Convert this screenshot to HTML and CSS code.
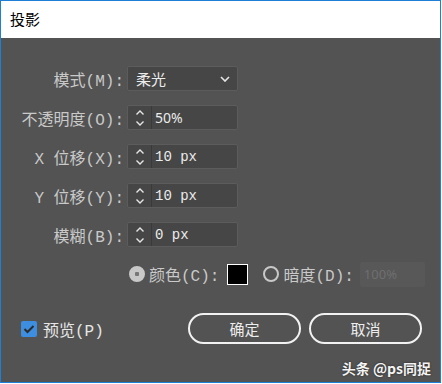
FILE: index.html
```html
<!DOCTYPE html>
<html>
<head>
	<title>投影</title>
	<meta content="width=device-width, initial-scale=1" name="viewport">
	<link rel="stylesheet" href="styles.css">
</head>
<body>
<div class="window">
	<div class="title-bar">投影</div>
	<div class="content">
		<div class="form">
			<label class="label">模式(M):</label>
			<div class="select">
				<span>柔光</span>
				<svg class="chevron" width="10" height="6" viewBox="0 0 10 6">
					<path d="M1,1 L5,5 L9,1" fill="none" stroke="#e6e6e6" stroke-width="1.6"></path>
				</svg>
			</div>

			<label class="label">不透明度(O):</label>
			<div class="field">
				<span class="spin">
					<svg width="10" height="18" viewBox="0 0 10 18">
						<path d="M1.5,5.5 L5,2 L8.5,5.5 M1.5,12.5 L5,16 L8.5,12.5" fill="none" stroke="#e6e6e6" stroke-width="1.4"></path>
					</svg>
				</span>
				<span class="value sans">50%</span>
			</div>

			<label class="label">X 位移(X):</label>
			<div class="field">
				<span class="spin">
					<svg width="10" height="18" viewBox="0 0 10 18">
						<path d="M1.5,5.5 L5,2 L8.5,5.5 M1.5,12.5 L5,16 L8.5,12.5" fill="none" stroke="#e6e6e6" stroke-width="1.4"></path>
					</svg>
				</span>
				<span class="value">10 px</span>
			</div>

			<label class="label">Y 位移(Y):</label>
			<div class="field">
				<span class="spin">
					<svg width="10" height="18" viewBox="0 0 10 18">
						<path d="M1.5,5.5 L5,2 L8.5,5.5 M1.5,12.5 L5,16 L8.5,12.5" fill="none" stroke="#e6e6e6" stroke-width="1.4"></path>
					</svg>
				</span>
				<span class="value">10 px</span>
			</div>

			<label class="label">模糊(B):</label>
			<div class="field">
				<span class="spin">
					<svg width="10" height="18" viewBox="0 0 10 18">
						<path d="M1.5,5.5 L5,2 L8.5,5.5 M1.5,12.5 L5,16 L8.5,12.5" fill="none" stroke="#e6e6e6" stroke-width="1.4"></path>
					</svg>
				</span>
				<span class="value">0 px</span>
			</div>
		</div>

		<div class="radio-row">
			<span class="radio checked"></span>
			<span class="label">颜色(C):</span>
			<span class="swatch"></span>
			<span class="radio"></span>
			<span class="label">暗度(D):</span>
			<span class="disabled-field">100%</span>
		</div>

		<div class="footer">
			<div class="preview">
				<span class="checkbox">
					<svg width="12" height="10" viewBox="0 0 12 10">
						<path d="M1.5,5 L4.5,8 L10.5,2" fill="none" stroke="#2b2b2b" stroke-width="2"></path>
					</svg>
				</span>
				<span class="label">预览(P)</span>
			</div>
			<div class="buttons">
				<button class="btn">确定</button>
				<button class="btn">取消</button>
			</div>
		</div>

		<div class="watermark">头条 @ps同捉</div>
	</div>
</div>
</body>
</html>
```

FILE: styles.css
```css
body {
	margin: 0;
	background: #fff;
}

.window {
	width: 439px;
	height: 381px;
	border: 1px solid #1f7fd6;
	background: #535353;
	display: flex;
	flex-direction: column;
}

.title-bar {
	height: 37px;
	background: #fff;
	color: #000;
	font-family: "Noto Sans CJK SC", sans-serif;
	font-size: 15px;
	line-height: 35px;
	padding-left: 9px;
}

.content {
	flex: 1;
	display: flex;
	flex-direction: column;
	padding-top: 28px;
}

.label {
	color: #c9c9c9;
	font-family: "Liberation Mono", "Noto Sans CJK SC", monospace;
	font-size: 16px;
	white-space: pre;
}

.form {
	display: grid;
	grid-template-columns: 123px 111px;
	column-gap: 3px;
	row-gap: 14px;
	align-items: center;
}

.form .label {
	text-align: right;
}

.select,
.field {
	height: 23px;
	border: 1px solid #5c5c5c;
	border-radius: 2px;
	background: #464646;
	display: flex;
	align-items: center;
	color: #ebebeb;
}

.select {
	justify-content: space-between;
	padding: 0 7px 0 8px;
	font-family: "Noto Sans CJK SC", sans-serif;
	font-size: 15px;
}

.field {
	width: 109px;
}

.spin {
	width: 23px;
	height: 100%;
	border-right: 1px solid #3a3a3a;
	display: flex;
	align-items: center;
	justify-content: center;
}

.value {
	padding-left: 3px;
	font-family: "Liberation Mono", monospace;
	font-size: 14px;
}

.value.sans {
	font-family: "Noto Sans", sans-serif;
}

.radio-row {
	display: flex;
	align-items: center;
	margin-top: 14px;
	padding-left: 128px;
	height: 26px;
}

.radio {
	width: 12px;
	height: 12px;
	border: 2px solid #c8c8c8;
	border-radius: 50%;
	margin-right: 4px;
}

.radio.checked {
	background: radial-gradient(circle, #777 0 2px, #c8c8c8 2.5px);
}

.swatch {
	width: 19px;
	height: 19px;
	border: 1px solid #fff;
	background: #000;
	margin-left: 8px;
	margin-right: 15px;
}

.disabled-field {
	width: 65px;
	height: 25px;
	margin-left: 6px;
	border-radius: 2px;
	background: #585858;
	color: #6f6f6f;
	font-family: "Noto Sans", sans-serif;
	font-size: 13px;
	line-height: 25px;
	padding-left: 4px;
	box-sizing: border-box;
}

.footer {
	display: flex;
	align-items: center;
	justify-content: space-between;
	margin-top: 26px;
	padding: 0 18px 0 20px;
}

.preview {
	display: flex;
	align-items: center;
	gap: 6px;
}

.checkbox {
	width: 16px;
	height: 16px;
	border-radius: 2px;
	background: #3d8ee0;
	display: flex;
	align-items: center;
	justify-content: center;
}

.preview .label {
	color: #e6e6e6;
}

.buttons {
	display: flex;
	gap: 8px;
}

.btn {
	width: 113px;
	height: 31px;
	border: 2px solid #f2f2f2;
	border-radius: 16px;
	background: transparent;
	color: #ededed;
	font-family: "Noto Sans CJK SC", sans-serif;
	font-size: 15px;
	padding: 0;
}

.watermark {
	align-self: flex-end;
	margin-top: 14px;
	margin-right: 9px;
	color: #f4f4f4;
	font-family: "Noto Sans CJK SC", sans-serif;
	font-size: 14px;
	font-weight: bold;
	text-shadow: 0 0 2px #222;
}
```
